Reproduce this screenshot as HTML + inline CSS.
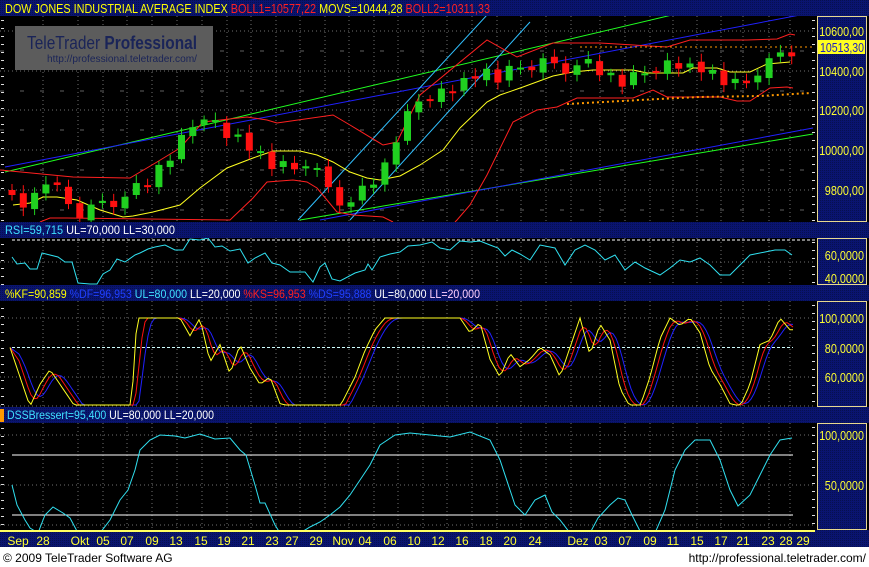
<!DOCTYPE html>
<html><head><meta charset="utf-8"><style>
body{margin:0;width:869px;height:567px;overflow:hidden;background:#fff;font-family:"Liberation Sans",sans-serif}
svg{display:block}
</style></head><body>
<svg id="s" width="869" height="567" xmlns="http://www.w3.org/2000/svg" font-family="Liberation Sans, sans-serif">
<defs>
<pattern id="nv" width="2" height="2" patternUnits="userSpaceOnUse"><rect width="2" height="2" fill="#0a1470"/><rect width="1" height="1" fill="#061050"/></pattern>
<clipPath id="cm"><rect x="0" y="16" width="815" height="206"/></clipPath>
<clipPath id="cr"><rect x="0" y="238" width="815" height="47"/></clipPath>
<clipPath id="cs"><rect x="0" y="301" width="815" height="106"/></clipPath>
<clipPath id="cd"><rect x="0" y="423" width="815" height="107"/></clipPath>
</defs>
<rect width="869" height="547" fill="#000"/>
<rect x="0" y="0" width="869" height="16" fill="url(#nv)"/>
<text x="5" y="13" font-size="13" fill="#ffff00" textLength="485" lengthAdjust="spacingAndGlyphs">DOW JONES INDUSTRIAL AVERAGE INDEX <tspan fill="#ff2020">BOLL1=10577,22</tspan> MOVS=10444,28 <tspan fill="#ff2020">BOLL2=10311,33</tspan></text>
<rect x="0" y="222" width="869" height="16" fill="url(#nv)"/>
<text x="5" y="234" font-size="12" fill="#40e0ff" textLength="170" lengthAdjust="spacingAndGlyphs">RSI=59,715 <tspan fill="#fff">UL=70,000 LL=30,000</tspan></text>
<rect x="0" y="285" width="869" height="16" fill="url(#nv)"/>
<text x="5" y="298" font-size="12" fill="#ffff00" textLength="475" lengthAdjust="spacingAndGlyphs">%KF=90,859 <tspan fill="#2040ff">%DF=96,953</tspan> <tspan fill="#40e0ff">UL=80,000</tspan> <tspan fill="#fff">LL=20,000</tspan> <tspan fill="#ff2020">%KS=96,953</tspan> <tspan fill="#2040ff">%DS=95,888</tspan> <tspan fill="#fff">UL=80,000</tspan> <tspan fill="#ffd0ff">LL=20,000</tspan></text>
<rect x="0" y="407" width="869" height="16" fill="url(#nv)"/>
<rect x="0" y="409" width="4" height="13" fill="#ff9900"/>
<text x="7" y="419" font-size="12" fill="#40e0ff" textLength="207" lengthAdjust="spacingAndGlyphs">DSSBressert=95,400 <tspan fill="#fff">UL=80,000 LL=20,000</tspan></text>
<rect x="0" y="530" width="869" height="17" fill="url(#nv)"/>
<line x1="0" y1="531" x2="815" y2="531" stroke="#ffff60" stroke-width="2"/>
<g id="g"></g>
<g font-size="12" fill="#000"><text x="3" y="562">© 2009 TeleTrader Software AG</text><text x="866" y="562" text-anchor="end">http://professional.teletrader.com/</text></g>
</svg>
<script>
var S=document.getElementById('g'),H='';
function el(s){H+=s}
function interp(k,x){for(var i=1;i<k.length;i++){if(x<=k[i][0]){var a=k[i-1],b=k[i];return a[1]+(b[1]-a[1])*(x-a[0])/(b[0]-a[0]);}}return k[k.length-1][1];}
function pl(pts,col,clip,w,dash){el('<polyline clip-path="url(#'+clip+')" fill="none" stroke="'+col+'" stroke-width="'+(w||1)+'"'+(dash?' stroke-dasharray="'+dash+'"':'')+' points="'+pts.map(function(p){return p[0].toFixed(1)+','+p[1].toFixed(1)}).join(' ')+'"/>');}
var xs=[43,78,103,127,152,177,202,227,251,276,300,325,349,374,398,423,447,472,497,521,546,571,600,625,650,673,697,721,743,769,790];
[[16,222],[238,285],[301,407],[423,530]].forEach(function(r){xs.forEach(function(x){el('<line x1="'+x+'" y1="'+r[0]+'" x2="'+x+'" y2="'+r[1]+'" stroke="#707070" stroke-dasharray="1 3"/>')});});
[31,71,110,150,190].forEach(function(y){el('<line x1="0" y1="'+y+'" x2="815" y2="'+y+'" stroke="#707070" stroke-dasharray="1 3"/>')});
[51,91,130,170,210].forEach(function(y){el('<line x1="0" y1="'+y+'" x2="815" y2="'+y+'" stroke="#606060" stroke-dasharray="4 16"/>')});
[262].forEach(function(y){el('<line x1="0" y1="'+y+'" x2="815" y2="'+y+'" stroke="#707070" stroke-dasharray="1 3"/>')});
[318,377,406].forEach(function(y){el('<line x1="0" y1="'+y+'" x2="815" y2="'+y+'" stroke="#707070" stroke-dasharray="1 3"/>')});
[435,485,525].forEach(function(y){el('<line x1="0" y1="'+y+'" x2="815" y2="'+y+'" stroke="#707070" stroke-dasharray="1 3"/>')});
for(var y=20;y<528;y+=8){if((y>222&&y<238)||(y>285&&y<301)||(y>407&&y<423))continue;el('<rect x="1" y="'+y+'" width="3" height="1" fill="#ddd"/>');}
el('<rect x="15" y="26" width="198" height="44" fill="#5c5c5c"/>');
el('<text x="27" y="49" font-size="18" fill="#1a2458" textLength="170" lengthAdjust="spacingAndGlyphs">TeleTrader <tspan font-weight="bold">Professional</tspan></text>');
el('<text x="47" y="62" font-size="10" fill="#1a2458" textLength="150" lengthAdjust="spacingAndGlyphs">http://professional.teletrader.com/</text>');
el('<g clip-path="url(#cm)">');
el('<line x1="5" y1="172" x2="672" y2="15" stroke="#20ff20"/>');
el('<line x1="5" y1="167" x2="800" y2="15" stroke="#2020ff"/>');
el('<line x1="300" y1="220" x2="813" y2="134" stroke="#20ff20"/>');
el('<line x1="320" y1="220" x2="813" y2="128" stroke="#2020ff"/>');
el('<line x1="298" y1="220" x2="487" y2="15" stroke="#30c0ff"/>');
el('<line x1="350" y1="220" x2="530" y2="22" stroke="#30c0ff"/>');
el('</g>');
pl([[0,170],[73,177],[130,178],[157,162],[180,148],[203,122],[247,117],[267,120],[277,123],[333,115],[350,125],[383,145],[397,142],[420,95],[487,40],[517,57],[553,43],[600,43],[667,47],[690,40],[747,40],[777,39],[790,34],[795,35]],'#ff2020','cm');
pl([[40,222],[50,218],[67,218],[230,220],[253,198],[267,182],[293,180],[307,182],[317,188],[337,212],[353,215],[383,217],[393,222]],'#ff2020','cm');
pl([[455,222],[457,220],[470,205],[487,175],[513,122],[537,110],[557,107],[577,98],[633,98],[653,90],[667,97],[720,97],[737,101],[750,101],[770,88],[787,87],[793,88]],'#ff2020','cm');
pl([[13,205],[30,203],[43,197],[57,197],[77,200],[100,210],[123,217],[133,216],[153,212],[180,205],[200,188],[227,168],[253,158],[273,151],[300,151],[317,155],[333,162],[350,172],[367,178],[380,180],[400,176],[420,165],[443,150],[460,128],[487,102],[500,95],[523,87],[553,76],[573,72],[593,70],[633,70],[647,73],[683,73],[693,68],[717,68],[730,72],[750,72],[767,64],[790,62]],'#ffff20','cm');
el('<line x1="580" y1="47" x2="815" y2="47" stroke="#ff9900" stroke-dasharray="2 3"/>');
pl([[567,104],[640,100],[700,97],[760,96],[810,93]],'#ff9900','cm',2,'2 3');
var ck=[[12,195],[30,205],[45,180],[60,195],[80,210],[110,205],[125,195],[145,185],[165,160],[185,135],[205,115],[220,130],[240,135],[255,150],[270,165],[290,170],[310,155],[325,190],[345,205],[365,190],[385,165],[400,125],[420,100],[440,95],[460,80],[480,70],[500,80],[520,65],[540,60],[560,72],[580,62],[600,70],[620,80],[640,75],[660,68],[680,62],[700,65],[720,80],[740,88],[760,65],[780,58],[795,50]];
var nz=[0,7,-5,4,-8,3,9,-4,-6,5,2,-7,6,-3,8,-5,0,4,-6,7];
var prev=null;
for(var i=0;i<70;i++){var x=12+i*11.3;var c=interp(ck,x)+nz[i%20]*0.9;var o=prev===null?c-5:prev+nz[(i+7)%20]*0.3;var up=c<o;var t=Math.min(o,c),b=Math.max(o,c);if(b-t<2){b=t+2}
el('<g clip-path="url(#cm)"><line x1="'+x+'" y1="'+(t-4-Math.abs(nz[(i+3)%20])/2)+'" x2="'+x+'" y2="'+(b+4+Math.abs(nz[(i+5)%20])/2)+'" stroke="'+(up?'#20d020':'#ff1010')+'"/><rect x="'+(x-3.5)+'" y="'+t+'" width="7" height="'+(b-t)+'" fill="'+(up?'#20d020':'#ff1010')+'"/></g>');prev=c;}
el('<line x1="12" y1="240" x2="815" y2="240" stroke="#fff" stroke-dasharray="3 2"/>');
pl([[12,257],[17,264],[25,263],[30,269],[37,269],[42,253],[50,255],[58,257],[65,262],[72,262],[78,283],[90,284],[97,284],[103,274],[110,270],[117,259],[125,262],[135,255],[140,253],[148,249],[155,247],[165,245],[175,250],[183,250],[190,239],[200,240],[208,238],[215,247],[222,246],[230,251],[240,249],[248,263],[255,258],[265,253],[272,263],[280,265],[290,272],[305,272],[313,282],[320,267],[325,263],[332,279],[340,281],[355,273],[365,270],[368,264],[372,270],[380,257],[390,254],[400,252],[408,246],[420,245],[432,242],[440,248],[450,250],[460,241],[470,242],[480,241],[490,245],[498,248],[505,256],[512,250],[520,254],[530,260],[540,245],[555,248],[565,265],[575,250],[585,245],[595,250],[605,260],[615,255],[625,270],[635,262],[645,268],[660,275],[670,268],[680,260],[690,262],[700,258],[710,265],[720,275],[730,275],[740,265],[750,255],[765,252],[775,250],[785,250],[792,255]],'#30e0f0','cr');
function sy(v){return 318+(100-v)*1.475}
el('<line x1="12" y1="347.5" x2="793" y2="347.5" stroke="#d0ffff" stroke-dasharray="3 2"/>');
var kk=[[10,80],[20,60],[30,40],[40,55],[50,65],[60,55],[75,40],[90,25],[130,25],[137,100],[180,100],[190,88],[200,100],[210,70],[220,82],[230,62],[240,82],[250,66],[260,55],[270,60],[280,42],[290,40],[300,25],[330,25],[340,40],[355,60],[365,78],[375,92],[385,100],[460,100],[470,90],[480,97],[490,72],[500,60],[510,76],[520,67],[530,72],[540,80],[550,75],[560,60],[570,80],[580,100],[590,75],[600,96],[610,85],[620,52],[630,40],[640,40],[650,60],[660,86],[670,100],[680,95],[690,100],[700,90],[710,66],[720,55],[730,42],[740,40],[750,55],[760,82],[770,85],[780,100],[790,92]];
var K=[],R=[],B=[];for(var x=10;x<=793;x+=3){K.push(interp(kk,x))}
for(var i=0;i<K.length;i++){var s=0,n=0;for(var j=Math.max(0,i-3);j<=i;j++){s+=K[j];n++}R.push(s/n)}
for(var i=0;i<R.length;i++){var s=0,n=0;for(var j=Math.max(0,i-3);j<=i;j++){s+=R[j];n++}B.push(s/n)}
function mp(a){return a.map(function(v,i){return [10+i*3,Math.min(405,sy(v))]})}
pl(mp(B),'#2020ff','cs');pl(mp(R),'#ff1010','cs');pl(mp(K),'#ffff20','cs');
el('<line x1="12" y1="455" x2="793" y2="455" stroke="#fff"/><line x1="12" y1="515" x2="793" y2="515" stroke="#fff"/>');
pl([[12,485],[17,505],[25,520],[30,528],[38,533],[45,515],[53,507],[63,513],[70,518],[78,533],[100,533],[110,520],[120,500],[128,490],[135,470],[140,450],[150,440],[160,435],[175,436],[185,438],[200,434],[215,439],[230,438],[240,450],[246,455],[255,485],[260,503],[265,503],[275,525],[280,533],[300,533],[310,527],[320,522],[330,515],[340,507],[350,495],[360,480],[370,465],[380,445],[395,435],[410,433],[430,435],[450,437],[470,432],[490,440],[500,460],[510,490],[515,505],[525,515],[535,500],[545,495],[552,512],[560,520],[570,533],[590,533],[598,518],[610,505],[618,498],[625,500],[632,515],[641,533],[655,533],[665,510],[675,470],[685,450],[695,440],[710,440],[720,460],[730,490],[738,506],[750,495],[760,475],[770,455],[780,440],[792,438]],'#30e0f0','cd');
[[16,222],[238,285],[301,407],[423,530]].forEach(function(r){el('<rect x="817.5" y="'+(r[0]+0.5)+'" width="49" height="'+(r[1]-r[0]-1)+'" fill="url(#nv)" stroke="#e8d890"/>');for(var y=r[0]+4;y<r[1];y+=8)el('<rect x="812" y="'+y+'" width="3" height="1" fill="#ddd"/>');});
el('<rect x="817" y="531" width="50" height="16" fill="url(#nv)"/>');
function rt(y,t){var w=t.length*5.6;el('<text x="'+(864-w)+'" y="'+y+'" font-size="13" fill="#ffff30" textLength="'+w+'" lengthAdjust="spacingAndGlyphs">'+t+'</text>')}
rt(36,'10600,00');rt(76,'10400,00');rt(115,'10200,00');rt(155,'10000,00');rt(195,'9800,00');
el('<rect x="818" y="40" width="47" height="14" fill="#ffff20"/><text x="820" y="52" font-size="13" fill="#2020c0" textLength="44" lengthAdjust="spacingAndGlyphs">10513,30</text>');
rt(260,'60,0000');rt(283,'40,0000');rt(323,'100,0000');rt(353,'80,0000');rt(382,'60,0000');rt(440,'100,0000');rt(490,'50,0000');
var lb=[['Sep',18],['28',43],['Okt',80],['05',103],['07',127],['09',152],['13',176],['15',201],['19',224],['21',248],['23',272],['27',292],['29',316],['Nov',343],['04',365],['06',390],['10',414],['12',438],['16',462],['18',486],['20',510],['24',535],['Dez',578],['03',601],['07',625],['09',650],['11',673],['15',697],['17',721],['21',743],['23',768],['28',786],['29',803]];
lb.forEach(function(l){el('<text x="'+l[1]+'" y="545" font-size="12" fill="#ffff30" text-anchor="middle">'+l[0]+'</text>')});
S.innerHTML=H;
</script>
</body></html>
